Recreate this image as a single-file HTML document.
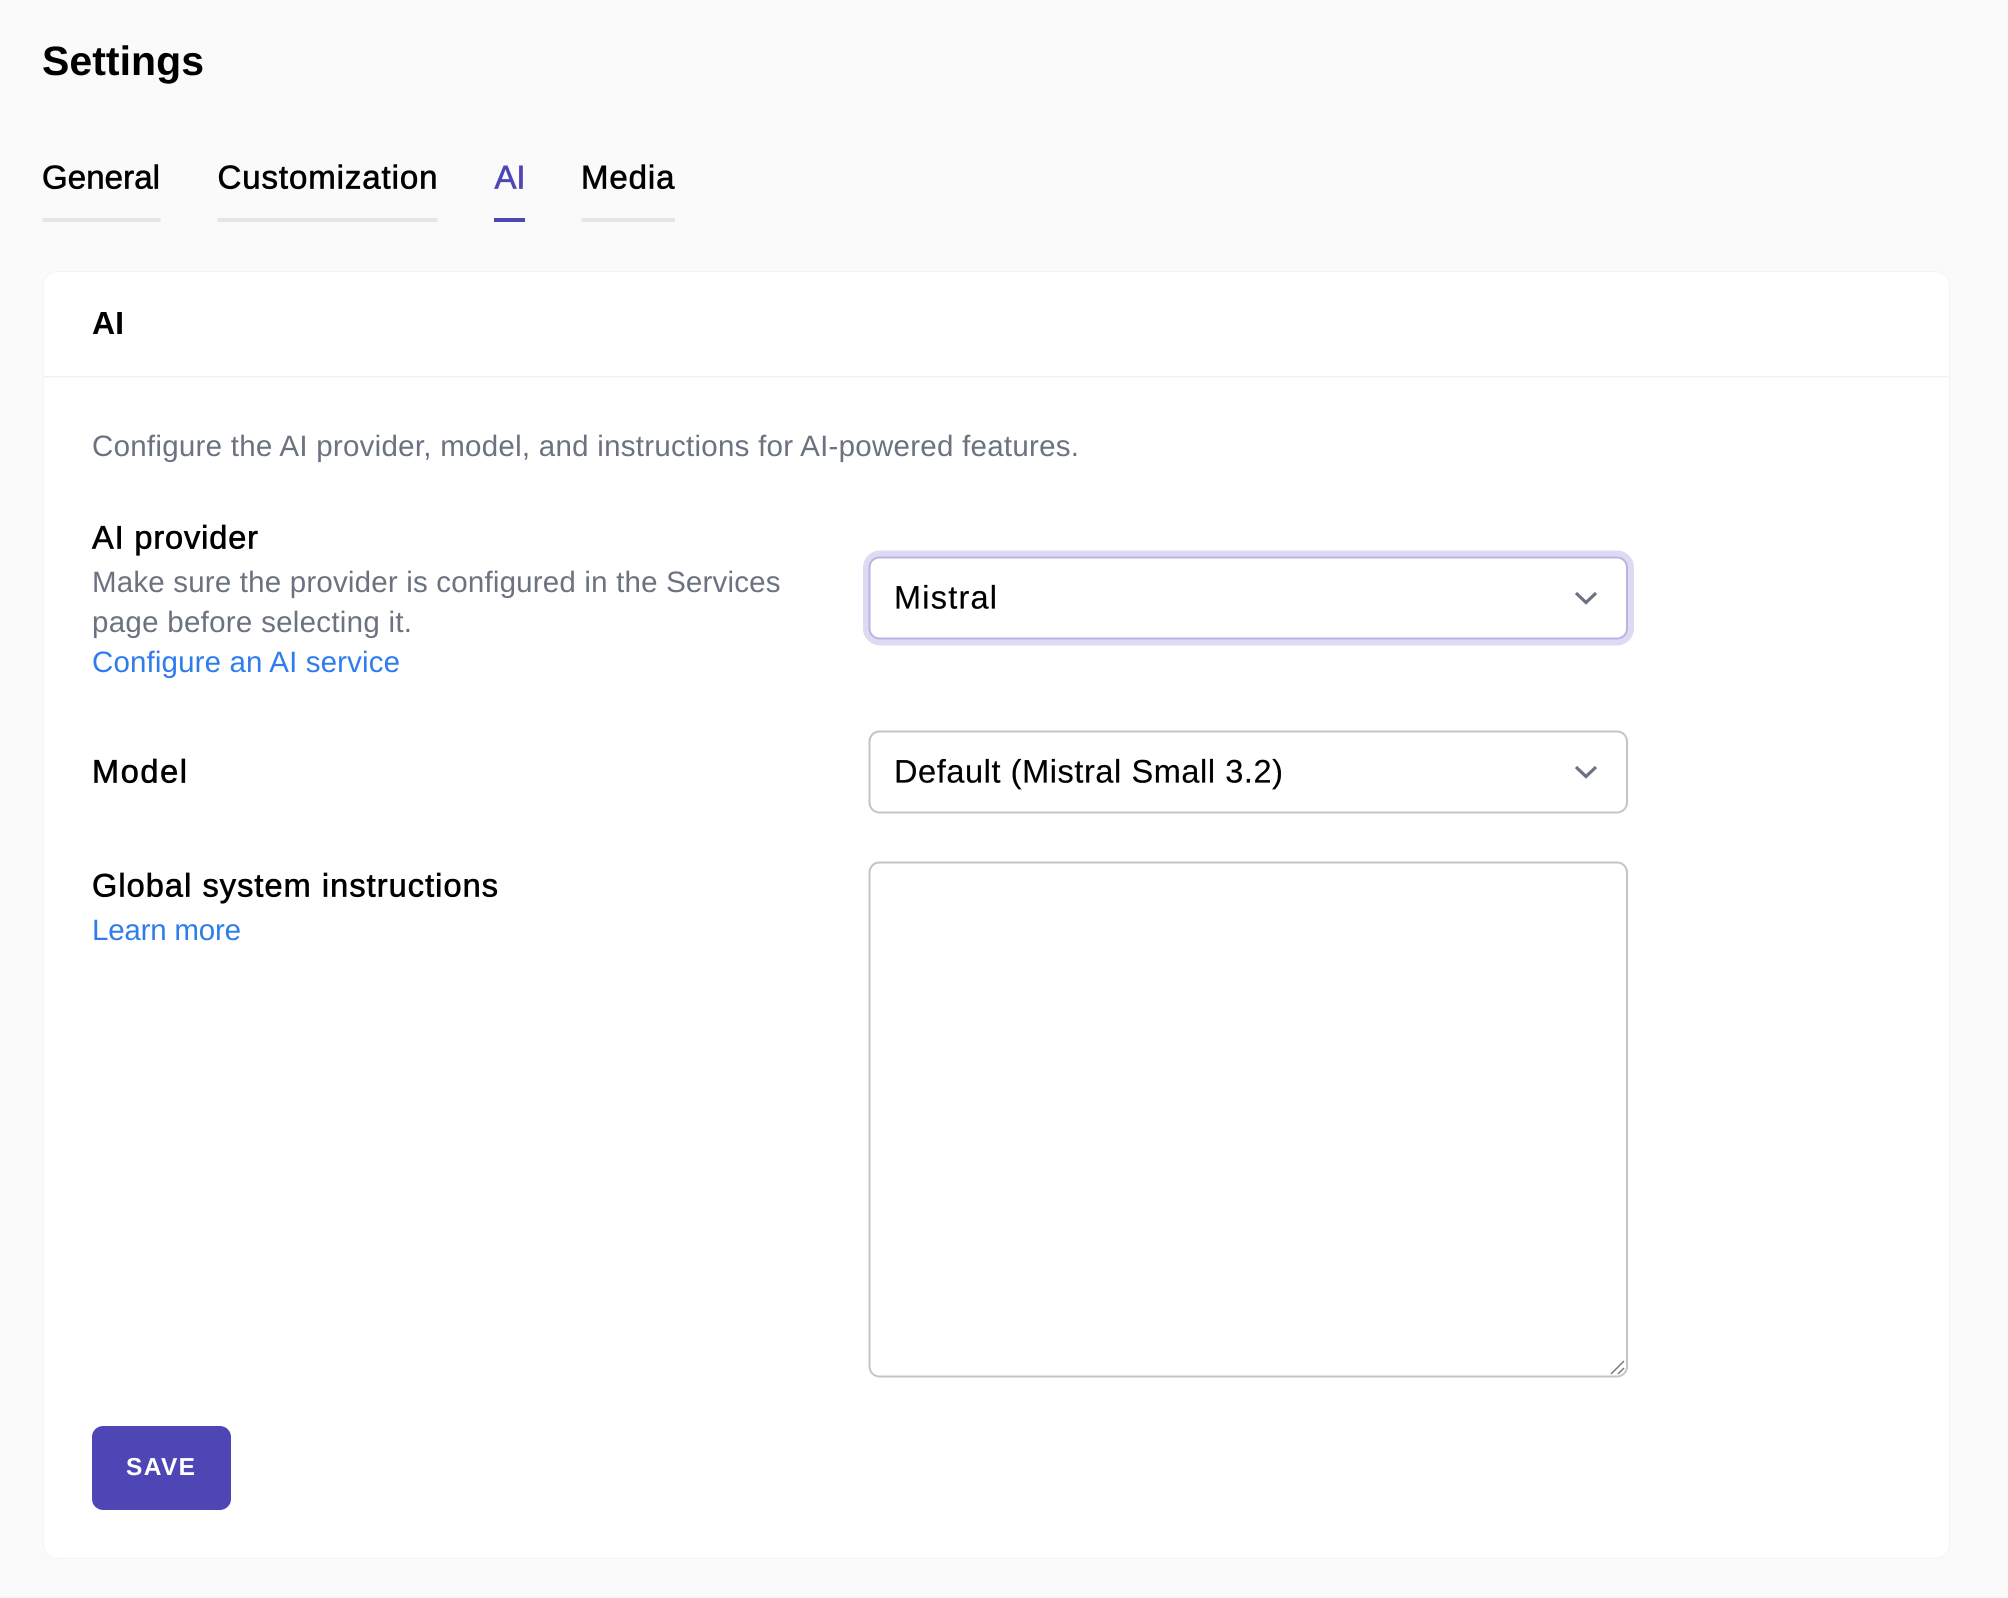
<!DOCTYPE html>
<html lang="en">
<head>
<meta charset="utf-8">
<title>Settings</title>
<style>
html,body{margin:0;padding:0;background:#fafafa;}
body{width:2008px;height:1598px;overflow:hidden;position:relative;}
svg{position:absolute;left:0;top:0;display:block;}
text{font-family:"Liberation Sans",Arial,sans-serif;text-rendering:geometricPrecision;}
.m{stroke-width:.65px;}
.lab{font-size:32.5px;fill:#000;stroke:#000;}
.tab{font-size:33px;fill:#000;stroke:#000;}
.gray{font-size:29.5px;fill:#6b7280;}
.link{font-size:29.5px;fill:#2f7ded;}
.val{font-size:32.5px;fill:#000;stroke:#000;stroke-width:.2px;}
</style>
</head>
<body>
<svg width="2008" height="1598" viewBox="0 0 2008 1598" xmlns="http://www.w3.org/2000/svg">
  <rect width="2008" height="1598" fill="#fafafa"/>

  <text x="42" y="75" font-size="41" font-weight="700" fill="#000" textLength="162" lengthAdjust="spacing">Settings</text>

  <text class="tab m" x="42" y="188.5" textLength="118" lengthAdjust="spacing">General</text>
  <rect x="42.5" y="218" width="118" height="4" fill="#e5e5e6"/>
  <text class="tab m" x="217.5" y="188.5" textLength="220" lengthAdjust="spacing">Customization</text>
  <rect x="217.5" y="218" width="220" height="4" fill="#e5e5e6"/>
  <text class="tab m" x="494.5" y="188.5" textLength="31" lengthAdjust="spacing" style="fill:#4f46b5;stroke:#4f46b5">AI</text>
  <rect x="494" y="218" width="31" height="4" fill="#4f46b5"/>
  <text class="tab m" x="581" y="188.5" textLength="93.5" lengthAdjust="spacing">Media</text>
  <rect x="581.5" y="218" width="93.5" height="4" fill="#e5e5e6"/>

  <rect x="43.5" y="271.5" width="1906" height="1287" rx="14" fill="#fff" stroke="#f4f4f5" stroke-width="1"/>
  <rect x="44" y="376" width="1905" height="1.5" fill="#f1f1f2"/>

  <text x="92" y="334" font-size="32" font-weight="700" fill="#000" textLength="32" lengthAdjust="spacing">AI</text>

  <text class="gray" x="92" y="456" textLength="987" lengthAdjust="spacing">Configure the AI provider, model, and instructions for AI-powered features.</text>

  <text class="lab m" x="92" y="548.5" textLength="166" lengthAdjust="spacing">AI provider</text>
  <text class="gray" x="92" y="592" textLength="688.5" lengthAdjust="spacing">Make sure the provider is configured in the Services</text>
  <text class="gray" x="92" y="632" textLength="320" lengthAdjust="spacing">page before selecting it.</text>
  <text class="link" x="92" y="672" textLength="308" lengthAdjust="spacing">Configure an AI service</text>

  <rect x="870" y="557.5" width="757" height="81" rx="10" fill="#dddaf2" stroke="#dddaf2" stroke-width="14"/>
  <rect x="869.5" y="557.5" width="757.5" height="81" rx="10" fill="#fff" stroke="#b9b5e3" stroke-width="2"/>
  <text class="val" x="894" y="608.5" textLength="103" lengthAdjust="spacing">Mistral</text>
  <path d="M1576 593L1586 602.5L1596 593" fill="none" stroke="#6b7280" stroke-width="3.2"/>

  <text class="lab m" x="92" y="782.5" textLength="95" lengthAdjust="spacing">Model</text>

  <rect x="869.5" y="731.5" width="757.5" height="81" rx="10" fill="#fff" stroke="#c4c4c4" stroke-width="2"/>
  <text class="val" x="894" y="782.5" textLength="389" lengthAdjust="spacing">Default (Mistral Small 3.2)</text>
  <path d="M1576 767L1586 776.5L1596 767" fill="none" stroke="#6b7280" stroke-width="3.2"/>

  <text class="lab m" x="92" y="896.5" textLength="406" lengthAdjust="spacing">Global system instructions</text>
  <text class="link" x="92" y="940" textLength="149" lengthAdjust="spacing">Learn more</text>

  <rect x="869.5" y="862.5" width="757.5" height="514" rx="10" fill="#fff" stroke="#c4c4c4" stroke-width="2"/>
  <path d="M1611 1374L1624 1361M1618 1374L1624 1368" fill="none" stroke="#777" stroke-width="1.5"/>

  <rect x="92" y="1426" width="139" height="84" rx="11" fill="#4f46b5"/>
  <text x="126" y="1475" font-size="24.5" font-weight="700" fill="#fff" textLength="69" lengthAdjust="spacing">SAVE</text>
</svg>
</body>
</html>
